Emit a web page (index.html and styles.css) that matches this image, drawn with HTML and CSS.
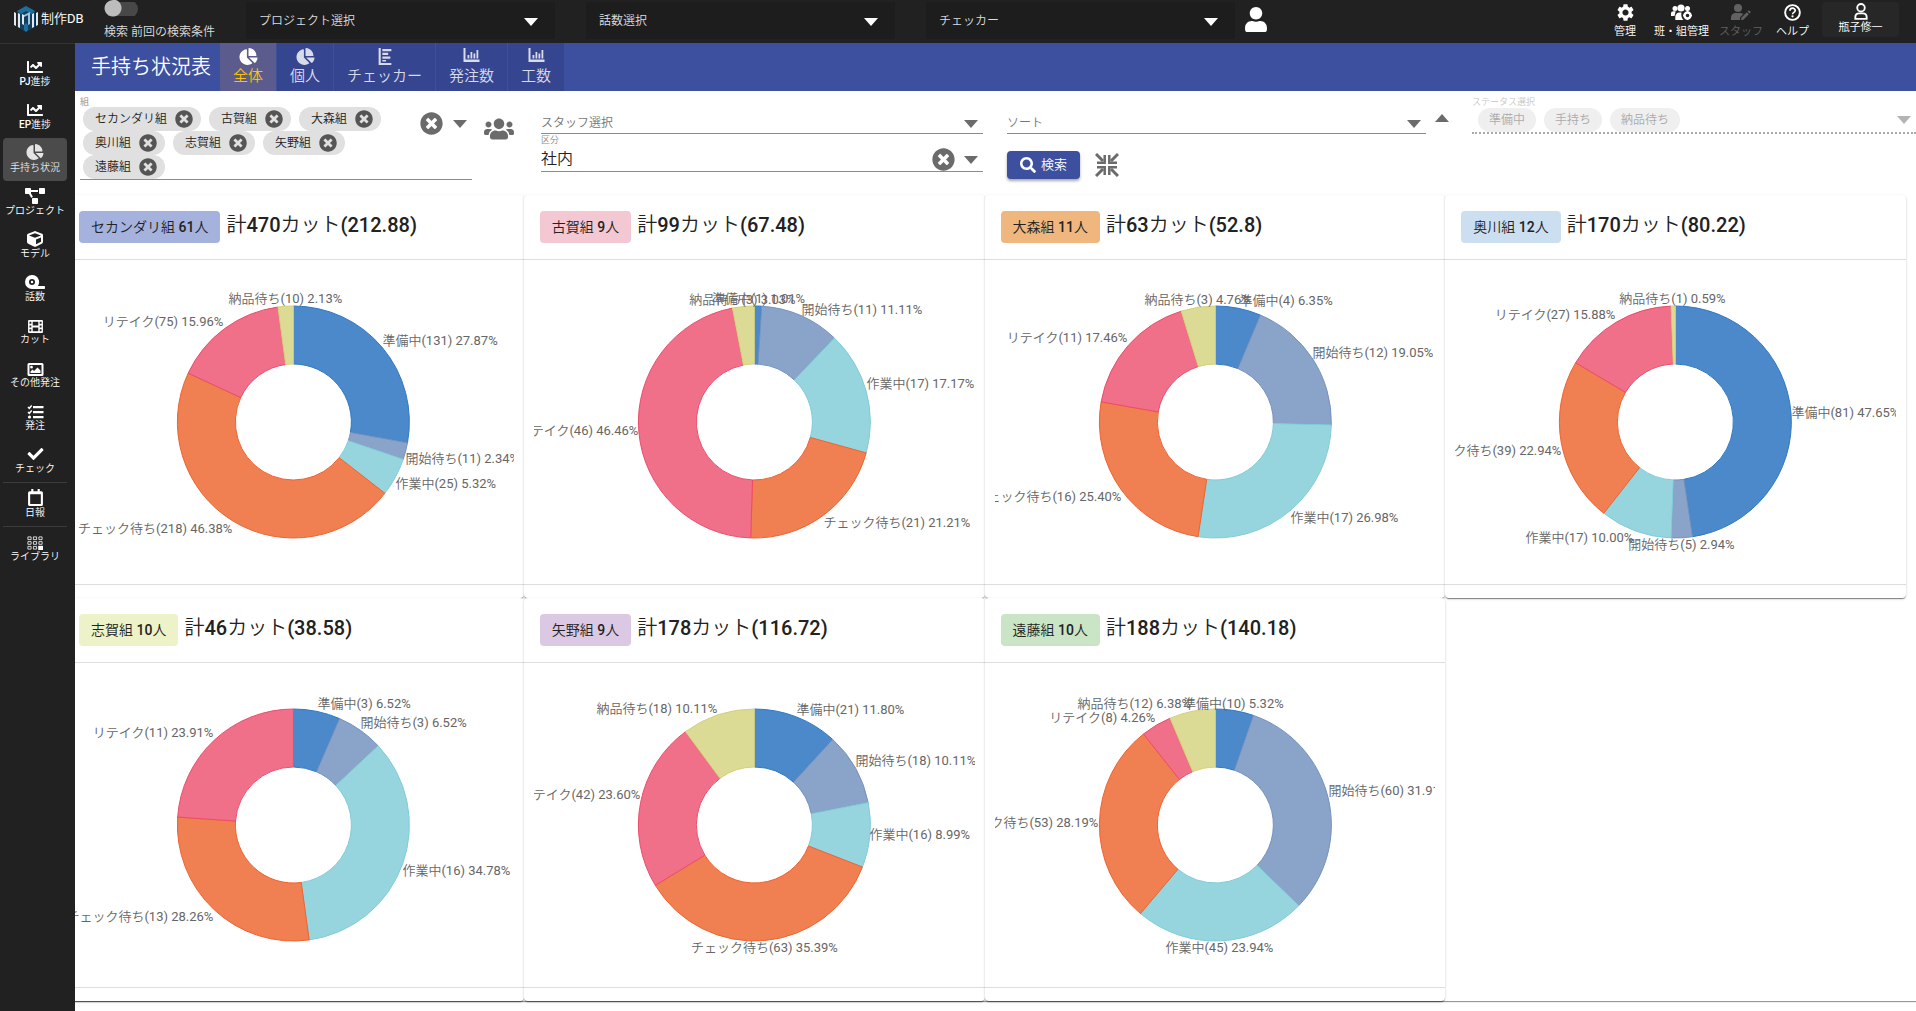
FILE: index.html
```html
<!DOCTYPE html>
<html lang="ja">
<head>
<meta charset="utf-8">
<meta name="viewport" content="width=device-width, initial-scale=1">
<title>手持ち状況表 | 制作DB</title>
<link rel="stylesheet" href="styles.css">
</head>
<body>
<svg class="sprite" aria-hidden="true">
  <symbol id="i-line" viewBox="0 0 512 512"><path d="M496 384H64V80c0-8.84-7.16-16-16-16H16C7.16 64 0 71.16 0 80v336c0 17.67 14.33 32 32 32h464c8.84 0 16-7.16 16-16v-32c0-8.84-7.16-16-16-16zM464 96H345.94c-21.38 0-32.09 25.85-16.97 40.97l32.4 32.4L288 242.75l-73.37-73.37c-12.5-12.5-32.76-12.5-45.25 0l-68.69 68.69c-6.25 6.25-6.25 16.38 0 22.63l22.62 22.62c6.25 6.25 16.38 6.25 22.63 0L192 237.25l73.37 73.37c12.5 12.5 32.76 12.5 45.25 0l96-96 32.4 32.4c15.12 15.12 40.97 4.41 40.97-16.97V112c.01-8.84-7.15-16-15.99-16z"/></symbol>
  <symbol id="i-pie" viewBox="0 0 544 512"><path d="M527.79 288H290.5l158.03 158.03c6.04 6.04 15.98 6.53 22.19.68 38.7-36.46 65.32-85.61 73.13-140.86 1.34-9.46-6.51-17.85-16.06-17.85zm-15.83-64.8C503.72 103.74 408.26 8.28 288.8.04 279.68-.59 272 7.1 272 16.24V240h223.77c9.14 0 16.82-7.68 16.19-16.8zM224 288V50.71c0-9.55-8.39-17.4-17.84-16.06C86.99 51.49-4.1 155.6.14 280.37 4.5 408.51 114.83 513.59 243.03 511.98c50.4-.63 96.97-16.87 135.26-44.03 7.9-5.6 8.42-17.23 1.57-24.08L224 288z"/></symbol>
  <symbol id="i-project" viewBox="0 0 640 512"><path d="M384 320H256c-17.67 0-32 14.33-32 32v128c0 17.67 14.33 32 32 32h128c17.67 0 32-14.33 32-32V352c0-17.67-14.33-32-32-32zM192 32c0-17.67-14.33-32-32-32H32C14.33 0 0 14.33 0 32v128c0 17.67 14.33 32 32 32h95.72l73.16 128.04C211.98 300.98 232.4 288 256 288h.28L192 175.51V128h224V64H192V32zM608 0H480c-17.67 0-32 14.33-32 32v128c0 17.67 14.33 32 32 32h128c17.67 0 32-14.33 32-32V32c0-17.67-14.33-32-32-32z"/></symbol>
  <symbol id="i-cube" viewBox="0 0 512 512"><path d="M239.1 6.3l-208 78c-18.7 7-31.1 25-31.1 45v225.1c0 18.2 10.3 34.8 26.5 42.9l208 104c13.5 6.8 29.4 6.8 42.9 0l208-104c16.3-8.1 26.5-24.8 26.5-42.9V129.3c0-20-12.4-37.9-31.1-44.9l-208-78C262 2.2 250 2.2 239.1 6.3zM256 68.4l192 72v1.1l-192 78-192-78v-1.1l192-72zm32 356V275.5l160-65v133.9l-160 80z"/></symbol>
  <symbol id="i-tape" viewBox="0 0 640 512"><path fill-rule="evenodd" d="M224 32a224 224 0 1 0 0 448h384c18 0 32-14 32-32v-32c0-18-14-32-32-32H410A224 224 0 0 0 224 32zm0 128a96 96 0 1 1 0 192 96 96 0 0 1 0-192zm0 56a40 40 0 1 0 0 80 40 40 0 0 0 0-80z"/></symbol>
  <symbol id="i-film" viewBox="0 0 16 14"><path fill-rule="evenodd" d="M1 0h14a1 1 0 0 1 1 1v12a1 1 0 0 1-1 1H1a1 1 0 0 1-1-1V1a1 1 0 0 1 1-1zm.5 2v2h2V2zm0 4v2h2V6zm0 4v2h2v-2zM5 2v4h6V2zm0 6v4h6V8zm7.500-6v2h2V2zm0 4v2h2V6zm0 4v2h2v-2z"/></symbol>
  <symbol id="i-image" viewBox="0 0 16 13"><path fill-rule="evenodd" d="M1.500 0h13A1.500 1.500 0 0 1 16 1.500v10a1.500 1.500 0 0 1-1.500 1.500h-13A1.500 1.500 0 0 1 0 11.500v-10A1.500 1.500 0 0 1 1.500 0zM2 2v9h12V2zm2 .8a1.400 1.400 0 1 1 0 2.800 1.400 1.400 0 0 1 0-2.800zM3 10V8.500l2-2 1.500 1.500L10 4.500l3 3V10z"/></symbol>
  <symbol id="i-tasks" viewBox="0 0 16 14"><path d="M5.500 1H16v2.200H5.500zM5.500 6H16v2.200H5.500zM5.500 11H16v2.200H5.500z"/><path fill="none" stroke="currentColor" stroke-width="1.500" d="M.5 2l1.300 1.300L4.200.6M.5 7l1.300 1.300 2.400-2.700"/><circle cx="2" cy="12" r="1.600"/></symbol>
  <symbol id="i-check" viewBox="0 0 512 512"><path d="M173.898 439.404l-166.4-166.4c-9.997-9.997-9.997-26.206 0-36.204l36.203-36.204c9.997-9.998 26.207-9.998 36.204 0L192 312.69 432.095 72.596c9.997-9.997 26.207-9.997 36.204 0l36.203 36.204c9.997 9.997 9.997 26.206 0 36.204l-294.4 294.401c-9.998 9.997-26.207 9.997-36.204-.001z"/></symbol>
  <symbol id="i-calendar" viewBox="0 0 14 16"><path fill-rule="evenodd" d="M3 0h2v2h4V0h2v2h1.500A1.500 1.500 0 0 1 14 3.500v11a1.500 1.500 0 0 1-1.500 1.500h-11A1.500 1.500 0 0 1 0 14.500v-11A1.500 1.500 0 0 1 1.500 2H3zM2 5v9h10V5z"/></symbol>
  <symbol id="i-library" viewBox="0 0 16 14"><path fill="none" stroke="currentColor" stroke-width=".8" d="M.9.9h3.200v2.700H.9zM6.400.9h3.200v2.700H6.400zM11.900.9h3.200v2.700h-3.200zM.9 5.600h3.200v2.700H.9zM6.400 5.600h3.200v2.700H6.400zM11.900 5.600h3.200v2.700h-3.200zM.9 10.400h3.200v2.700H.9zM6.400 10.400h3.200v2.700H6.400z"/><path d="M11.200 9.800H16V14h-4.800z"/></symbol>
  <symbol id="i-bar" viewBox="0 0 16 14"><path d="M0 0h2v11.500h14V14H0zM4 7h1.800v3.500H4zM7 4h1.800v6.500H7zM10 5.500h1.800v5H10zM13 2h1.800v8.500H13z"/></symbol>
  <symbol id="i-hbar" viewBox="0 0 12 16"><path d="M0 0h2v14h10v2H0zM3.500 1H12v2H3.500zM3.500 4.500H9v2H3.500zM3.500 8H11v2H3.500zM3.500 11.200h3.500v1.600H3.500z"/></symbol>
  <symbol id="i-times" viewBox="0 0 512 512"><path d="M256 8C119 8 8 119 8 256s111 248 248 248 248-111 248-248S393 8 256 8zm121.6 313.1c4.700 4.700 4.700 12.300 0 17L338 377.600c-4.700 4.700-12.300 4.700-17 0L256 312l-65.100 65.600c-4.700 4.700-12.300 4.700-17 0L134.400 338c-4.700-4.700-4.700-12.300 0-17l65.600-65-65.600-65.100c-4.700-4.700-4.700-12.300 0-17l39.600-39.600c4.700-4.700 12.300-4.700 17 0l65 65.700 65.100-65.600c4.700-4.700 12.300-4.700 17 0l39.600 39.600c4.700 4.700 4.700 12.300 0 17L312 256l65.600 65.100z"/></symbol>
  <symbol id="i-search" viewBox="0 0 512 512"><path d="M505 442.700L405.300 343c-4.500-4.500-10.600-7-17-7H372c27.600-35.300 44-79.700 44-128C416 93.100 322.900 0 208 0S0 93.100 0 208s93.100 208 208 208c48.300 0 92.700-16.400 128-44v16.300c0 6.400 2.500 12.500 7 17l99.700 99.700c9.400 9.400 24.600 9.400 33.900 0l28.300-28.300c9.400-9.400 9.400-24.600.1-34zM208 336c-70.700 0-128-57.200-128-128 0-70.700 57.200-128 128-128 70.700 0 128 57.200 128 128 0 70.700-57.200 128-128 128z"/></symbol>
  <symbol id="i-users" viewBox="0 0 640 512"><path d="M96 224c35.300 0 64-28.700 64-64s-28.700-64-64-64-64 28.700-64 64 28.700 64 64 64zm448 0c35.300 0 64-28.700 64-64s-28.700-64-64-64-64 28.700-64 64 28.700 64 64 64zm32 32h-64c-17.600 0-33.500 7.100-45.100 18.600 40.300 22.100 68.900 62 75.100 109.400h66c17.700 0 32-14.300 32-32v-32c0-35.300-28.700-64-64-64zm-256 0c61.900 0 112-50.100 112-112S381.900 32 320 32 208 82.100 208 144s50.100 112 112 112zm76.800 32h-8.300c-20.800 10-43.900 16-68.500 16s-47.600-6-68.500-16h-8.300C179.600 288 128 339.600 128 403.200V432c0 26.500 21.500 48 48 48h288c26.500 0 48-21.500 48-48v-28.800c0-63.600-51.600-115.200-115.200-115.200zm-223.700-13.400C161.500 263.100 145.600 256 128 256H64c-35.300 0-64 28.700-64 64v32c0 17.700 14.300 32 32 32h65.900c6.300-47.400 34.900-87.300 75.200-109.400z"/></symbol>
  <symbol id="i-user" viewBox="0 0 448 512"><path d="M224 256c70.700 0 128-57.300 128-128S294.700 0 224 0 96 57.300 96 128s57.300 128 128 128zm89.600 32h-16.700c-22.200 10.200-46.900 16-72.900 16s-50.600-5.800-72.900-16h-16.700C60.200 288 0 348.200 0 422.400V464c0 26.500 21.500 48 48 48h352c26.500 0 48-21.500 48-48v-41.600c0-74.200-60.200-134.400-134.400-134.400z"/></symbol>
  <symbol id="i-user-o" viewBox="0 0 14 18"><g fill="none" stroke="currentColor" stroke-width="2"><circle cx="7" cy="5" r="4"/><path d="M1 16.800v-1.800c0-2.500 1.500-4 4-4h4c2.500 0 4 1.500 4 4v1.800z"/></g></symbol>
  <symbol id="i-cog" viewBox="2 2 20 20"><path d="M19.140 12.940c.04-.3.060-.610.060-.940 0-.320-.020-.640-.070-.940l2.030-1.580c.180-.140.230-.410.120-.610l-1.920-3.320c-.120-.220-.370-.290-.590-.220l-2.390.960c-.5-.380-1.030-.7-1.620-.940l-.360-2.540c-.040-.240-.240-.410-.480-.410h-3.840c-.240 0-.430.170-.470.410l-.360 2.540c-.590.240-1.130.570-1.620.940l-2.390-.960c-.220-.080-.470 0-.590.220L2.740 8.870c-.120.210-.080.470.120.610l2.030 1.580c-.050.3-.090.630-.090.940s.020.640.070.940l-2.030 1.580c-.180.140-.230.410-.120.610l1.920 3.320c.120.220.370.290.590.220l2.390-.960c.5.380 1.030.7 1.620.940l.360 2.540c.050.240.240.410.480.410h3.840c.240 0 .440-.170.470-.410l.360-2.540c.590-.240 1.130-.560 1.620-.940l2.390.960c.220.080.470 0 .590-.220l1.920-3.320c.120-.220.070-.470-.120-.610l-2.010-1.580zM12 15.600c-1.980 0-3.600-1.620-3.600-3.600s1.620-3.600 3.600-3.600 3.600 1.620 3.600 3.600-1.620 3.600-3.600 3.600z"/></symbol>
  <symbol id="i-users-cog" viewBox="0 0 22 16"><circle cx="4" cy="4.500" r="2.500"/><circle cx="10" cy="4" r="3.600"/><circle cx="16.500" cy="4.500" r="2.500"/><path d="M0 12V9.500C0 8 1.200 7.300 2.500 7.300h2.200L3.500 12zM4.300 16v-3c0-3 2-4.500 4-4.500h2.200c-.6 2.800 0 5.500 2 7.500z"/><circle cx="16.500" cy="11.500" r="3" fill="none" stroke="currentColor" stroke-width="2.400"/><path d="M15.700 7h1.600v2h-1.600zM15.700 14h1.600v2h-1.600zM12 10.700h2v1.600h-2zM19 10.700h2v1.600h-2z"/></symbol>
  <symbol id="i-user-edit" viewBox="0 0 20 16"><circle cx="7" cy="4" r="4"/><path d="M0 16v-2.500C0 11 2 9 4.500 9h5c1 0 2 .4 2.800 1L9 13.500V16zM10.300 13.800l5.500-5.500 2 2-5.500 5.500-2.200.2zM16.500 7.600l1-1c.8-.8 2.800 1.200 2 2l-1 1z"/></symbol>
  <symbol id="i-help" viewBox="0 0 18 18"><circle cx="9" cy="9" r="7.800" fill="none" stroke="currentColor" stroke-width="2"/><path d="M6.300 7.200c0-3.700 5.600-3.500 5.600-.3 0 2-2.800 1.900-2.800 3.900" fill="none" stroke="currentColor" stroke-width="1.800"/><circle cx="9" cy="13" r="1.200"/></symbol>
  <symbol id="i-compress" viewBox="0 0 24 24"><g fill="none" stroke="currentColor" stroke-width="3"><path d="M1 1l7 7M23 1l-7 7M1 23l7-7M23 23l-7-7"/><path stroke-width="2.500" d="M9.700 2v7.700H2M14.300 2v7.700H22M9.700 22v-7.700H2M14.300 22v-7.700H22"/></g></symbol>
</svg>

<header class="topbar">
  <a class="brand" href="#">
    <svg class="brand-mark" viewBox="0 0 24 26" aria-hidden="true"><path fill="#123f60" d="M12 0l9 5v16l-9 5-9-5V5z"/><path fill="#1f6f9e" d="M12 0l9 5-4 3-5-3-5 3-4-3zM10 19l2-2 2 2v5l-2 2-2-2z"/><path fill="#dfe9ef" d="M0 6l2 1v13l-2-1zM4 7l2 1v14l-2-1zM8 8l2 1v10l-2-1zM24 6l-2 1v13l2-1zM20 7l-2 1v14l2-1z"/><path fill="#9cc3d8" d="M10 9l6-3v2l-6 3zM14 9l2-1v10l-2 1z"/></svg>
    <span>制作DB</span>
  </a>
  <label class="switch">
    <input type="checkbox">
    <span>検索 前回の検索条件</span>
  </label>
  <div class="top-selects">
    <div class="pick dark"><select aria-label="プロジェクト選択"><option>プロジェクト選択</option></select></div>
    <div class="pick dark"><select aria-label="話数選択"><option>話数選択</option></select></div>
    <div class="pick dark"><select aria-label="チェッカー"><option>チェッカー</option></select></div>
  </div>
  <button class="icon-btn me" type="button" aria-label="自分"><svg width="22" height="25"><use href="#i-user"/></svg></button>
  <nav class="top-links">
    <a href="#"><svg width="17" height="17"><use href="#i-cog"/></svg>管理</a>
    <a href="#"><svg width="22" height="16"><use href="#i-users-cog"/></svg>班・組管理</a>
    <a href="#" class="off"><svg width="20" height="16"><use href="#i-user-edit"/></svg>スタッフ</a>
    <a href="#"><svg width="17" height="17"><use href="#i-help"/></svg>ヘルプ</a>
    <button class="account" type="button"><svg width="14" height="17"><use href="#i-user-o"/></svg>瓶子修一</button>
  </nav>
</header>

<div class="shell">
  <nav class="side">
    <a href="#"><svg width="18" height="16"><use href="#i-line"/></svg>PJ進捗</a>
    <a href="#"><svg width="18" height="16"><use href="#i-line"/></svg>EP進捗</a>
    <a href="#" class="current"><svg width="18" height="16"><use href="#i-pie"/></svg>手持ち状況</a>
    <a href="#"><svg width="22" height="16"><use href="#i-project"/></svg>プロジェクト</a>
    <a href="#"><svg width="18" height="16"><use href="#i-cube"/></svg>モデル</a>
    <a href="#"><svg width="20" height="16"><use href="#i-tape"/></svg>話数</a>
    <a href="#"><svg width="17" height="13"><use href="#i-film"/></svg>カット</a>
    <a href="#"><svg width="17" height="13"><use href="#i-image"/></svg>その他発注</a>
    <a href="#"><svg width="17" height="14"><use href="#i-tasks"/></svg>発注</a>
    <a href="#" class="ruled"><svg width="17" height="16"><use href="#i-check"/></svg>チェック</a>
    <a href="#" class="ruled"><svg width="15" height="17"><use href="#i-calendar"/></svg>日報</a>
    <a href="#"><svg width="16" height="14"><use href="#i-library"/></svg>ライブラリ</a>
  </nav>

  <main class="main">
    <div class="titlebar">
      <h1>手持ち状況表</h1>
      <nav class="tabs">
        <a href="#" class="current"><svg width="19" height="17"><use href="#i-pie"/></svg>全体</a>
        <a href="#"><svg width="19" height="17"><use href="#i-pie"/></svg>個人</a>
        <a href="#"><svg width="14" height="17"><use href="#i-hbar"/></svg>チェッカー</a>
        <a href="#"><svg width="17" height="14"><use href="#i-bar"/></svg>発注数</a>
        <a href="#"><svg width="17" height="14"><use href="#i-bar"/></svg>工数</a>
      </nav>
    </div>

    <form class="filters">
      <div class="filter-team">
        <div class="tagfield">
          <span class="cap">組</span>
          <div class="tagrow">
            <ul class="chips">
              <li>セカンダリ組<button type="button" aria-label="セカンダリ組を外す"><svg width="18" height="18"><use href="#i-times"/></svg></button></li>
              <li>古賀組<button type="button" aria-label="古賀組を外す"><svg width="18" height="18"><use href="#i-times"/></svg></button></li>
              <li>大森組<button type="button" aria-label="大森組を外す"><svg width="18" height="18"><use href="#i-times"/></svg></button></li>
              <li>奥川組<button type="button" aria-label="奥川組を外す"><svg width="18" height="18"><use href="#i-times"/></svg></button></li>
              <li>志賀組<button type="button" aria-label="志賀組を外す"><svg width="18" height="18"><use href="#i-times"/></svg></button></li>
              <li>矢野組<button type="button" aria-label="矢野組を外す"><svg width="18" height="18"><use href="#i-times"/></svg></button></li>
              <li>遠藤組<button type="button" aria-label="遠藤組を外す"><svg width="18" height="18"><use href="#i-times"/></svg></button></li>
            </ul>
            <div class="tagtools">
              <button class="icon-btn" type="button" aria-label="組をクリア"><svg width="23" height="23"><use href="#i-times"/></svg></button>
              <button class="icon-btn" type="button" aria-label="組を開く"><span class="tri"></span></button>
            </div>
          </div>
        </div>
        <button class="icon-btn group" type="button" aria-label="メンバー"><svg width="30" height="24"><use href="#i-users"/></svg></button>
      </div>

      <div class="filter-staff">
        <div class="pick line first"><select aria-label="スタッフ選択"><option>スタッフ選択</option></select></div>
        <label class="cap" for="kubun">区分</label>
        <div class="pick line filled">
          <select id="kubun"><option>社内</option></select>
          <button class="icon-btn clear" type="button" aria-label="区分をクリア"><svg width="23" height="23"><use href="#i-times"/></svg></button>
        </div>
      </div>

      <div class="filter-sort">
        <div class="sortrow">
          <div class="pick line first"><select aria-label="ソート"><option>ソート</option></select></div>
          <button class="icon-btn" type="button" aria-label="昇順"><span class="tri up"></span></button>
        </div>
        <div class="actions">
          <button class="search" type="submit"><svg width="16" height="16"><use href="#i-search"/></svg>検索</button>
          <button class="icon-btn" type="button" aria-label="折りたたむ"><svg width="24" height="24"><use href="#i-compress"/></svg></button>
        </div>
      </div>

      <div class="filter-status">
        <span class="cap">ステータス選択</span>
        <div class="statusrow">
          <ul class="chips">
            <li>準備中</li>
            <li>手持ち</li>
            <li>納品待ち</li>
          </ul>
          <span class="tri"></span>
        </div>
      </div>
    </form>

    <div class="board">
      <div class="cards">
        <section class="card"><h2><span class="badge indigo">セカンダリ組 61人</span>計470カット(212.88)</h2><div class="chart"><svg data-team="secondary"></svg></div></section>
        <section class="card"><h2><span class="badge pink">古賀組 9人</span>計99カット(67.48)</h2><div class="chart"><svg data-team="koga"></svg></div></section>
        <section class="card"><h2><span class="badge orange">大森組 11人</span>計63カット(52.8)</h2><div class="chart"><svg data-team="omori"></svg></div></section>
        <section class="card"><h2><span class="badge sky">奥川組 12人</span>計170カット(80.22)</h2><div class="chart"><svg data-team="okugawa"></svg></div></section>
        <section class="card"><h2><span class="badge lime">志賀組 10人</span>計46カット(38.58)</h2><div class="chart"><svg data-team="shiga"></svg></div></section>
        <section class="card"><h2><span class="badge violet">矢野組 9人</span>計178カット(116.72)</h2><div class="chart"><svg data-team="yano"></svg></div></section>
        <section class="card"><h2><span class="badge green">遠藤組 10人</span>計188カット(140.18)</h2><div class="chart"><svg data-team="endo"></svg></div></section>
      </div>
    </div>
  </main>
</div>
<script src="charts.js"></script>
</body>
</html>
```

FILE: styles.css
```css
* { box-sizing: border-box; }

body {
  margin: 0;
  background: #fff;
  color: #222;
  font-family: Roboto, "Noto Sans CJK JP DemiLight", "Noto Sans CJK JP", sans-serif;
  font-size: 12px;
  line-height: 16px;
}

a { color: inherit; text-decoration: none; }
button, select { font: inherit; color: inherit; }
button { margin: 0; padding: 0; border: 0; background: none; cursor: pointer; }
ul { margin: 0; padding: 0; list-style: none; }
svg { display: block; fill: currentColor; }
.sprite { display: none; }
.icon-btn { display: flex; color: #6b6b6b; }

.tri {
  display: block;
  border: 7px solid transparent;
  border-top: 8px solid #6b6b6b;
  border-bottom: 0;
}
.tri.up { border-top: 0; border-bottom: 8px solid #6b6b6b; }

/* top bar */
.topbar {
  display: flex;
  align-items: center;
  height: 43px;
  padding-right: 17px;
  background: #212121;
  color: #fff;
}
.brand {
  display: flex;
  align-items: center;
  gap: 3px;
  width: 104px;
  padding-left: 14px;
  margin-top: -6px;
  font-size: 13px;
}
.brand-mark { width: 24px; height: 26px; }
.switch {
  display: flex;
  flex-direction: column;
  align-self: flex-start;
  gap: 6px;
  width: 142px;
  color: #ddd;
}
.switch input {
  appearance: none;
  width: 34px;
  height: 18px;
  margin: 0;
  border-radius: 9px;
  background:
    radial-gradient(circle at 9px 8px, #bdbdbd 8px, transparent 9px),
    linear-gradient(#484848, #484848) 4px 2px / 30px 14px no-repeat;
}
.top-selects {
  display: flex;
  flex: 0 1 989px;
  align-self: stretch;
  gap: 31px;
}
.pick { position: relative; flex: 1; }
.pick select {
  appearance: none;
  width: 100%;
  height: 100%;
  margin: 0;
  padding: 0;
  border: 0;
  outline: 0;
  background: none;
}
.pick::after {
  content: "";
  position: absolute;
  right: 5px;
  top: 50%;
  margin-top: -3px;
  border: 7px solid transparent;
  border-top: 8px solid #6b6b6b;
  border-bottom: 0;
  pointer-events: none;
}
.pick.dark {
  margin: 2px 0 4px;
  background: #1d1d1d;
  color: #ddd;
}
.pick.dark select { padding-left: 13px; }
.pick.dark::after { right: 17px; border-top-color: #fff; }
.me { margin-left: 10px; margin-top: -5px; color: #fff; }
.top-links {
  display: flex;
  align-self: flex-start;
  gap: 10px;
  margin-left: auto;
  font-size: 11px;
}
.top-links a {
  display: flex;
  flex-direction: column;
  align-items: center;
  justify-content: space-between;
  height: 35px;
  margin-top: 4px;
  line-height: 14px;
}
.top-links a:first-child { margin-right: 8px; }
.top-links .off { margin-right: 3px; color: #616161; }
.account {
  display: flex;
  flex-direction: column;
  align-items: center;
  justify-content: flex-end;
  width: 77px;
  height: 35px;
  margin: 2px 0 0 3px;
  padding-bottom: 1px;
  border-radius: 4px;
  background: #272727;
  line-height: 16px;
}

/* layout */
.shell { display: flex; min-height: calc(100vh - 43px); }
.side {
  flex: none;
  width: 75px;
  padding-top: 8px;
  border-top: 1px solid #333;
  background: #212121;
  color: #fff;
  font-size: 10px;
  font-weight: 500;
}
.side a {
  display: flex;
  flex-direction: column;
  align-items: center;
  justify-content: flex-end;
  width: 64px;
  height: 43px;
  margin: 0 8px 0 3px;
  padding-bottom: 6px;
  border-radius: 4px;
  line-height: 14px;
}
.side .current { background: #4b4b4b; color: #e4e4e4; }
.side .current svg { margin-bottom: 1px; }
.side .ruled { height: 44px; padding-bottom: 6px; border-bottom: 1px solid #3b3b3b; border-radius: 0; }
.main { flex: 1; min-width: 0; overflow: hidden; }

/* title bar */
.titlebar {
  display: flex;
  height: 48px;
  background: #3d4f9f;
  color: #fff;
}
.titlebar h1 {
  margin: 0;
  padding: 0 9px 0 16px;
  font-size: 20px;
  font-weight: 400;
  line-height: 48px;
}
.tabs { display: flex; font-size: 15px; }
.tabs a {
  display: flex;
  flex-direction: column;
  align-items: center;
  justify-content: space-between;
  padding: 5px 13px 5px;
  border-right: 1px solid #3d4f9f;
  background: #36458f;
  color: #d8dbea;
  line-height: 20px;
}
.tabs .current { background: #5c5b8d; color: #ffc107; }
.tabs .current svg { color: #fff; }

/* filters */
.filters {
  display: grid;
  grid-template-columns: 461fr 466fr 465fr 444fr;
  height: 104px;
  padding-left: 5px;
}
.cap {
  display: block;
  color: #8a8a8a;
  font-size: 9px;
  line-height: 12px;
}
.filter-team { display: flex; align-items: flex-start; }
.tagfield { flex: 1; border-bottom: 1px solid #8c8c8c; }
.tagfield .cap, .filter-status .cap { padding-top: 5px; height: 16px; }
.tagrow { display: flex; align-items: flex-start; }
.chips {
  display: flex;
  flex: 1;
  flex-wrap: wrap;
  column-gap: 8px;
  padding-left: 3px;
}
.chips li {
  display: flex;
  align-items: center;
  gap: 8px;
  height: 24px;
  padding: 0 8px 0 12px;
  border-radius: 12px;
  background: #e0e0e0;
}
.chips button { color: #555; }
.tagtools { display: flex; align-items: center; gap: 10px; padding: 5px 5px 0 0; }
.group { margin: 26px 27px 0 12px; }

.pick.line { border-bottom: 1px solid #8c8c8c; color: #757575; }
.pick.line.first { height: 43px; padding-top: 22px; }
.pick.line.first::after { top: 29px; margin-top: 0; }
.filter-staff { padding-right: 24px; }
.pick.filled { height: 26px; font-size: 16px; }
.pick.filled select { color: #222; }
.clear { position: absolute; right: 28px; top: 2px; }
.sortrow { display: flex; align-items: flex-start; }
.sortrow button { margin: 23px 23px 0 9px; }
.actions { display: flex; align-items: center; gap: 15px; margin-top: 17px; }
.search {
  display: flex;
  align-items: center;
  gap: 5px;
  height: 28px;
  padding: 0 13px;
  border-radius: 4px;
  background: #3d4f9f;
  box-shadow: 0 2px 3px rgba(0, 0, 0, .35);
  color: #fff;
  font-size: 13px;
}
.filter-status { opacity: .5; }
.filter-status .chips { padding-left: 6px; }
.filter-status .chips li { padding: 0 11px; color: #555; }
.statusrow {
  display: flex;
  align-items: center;
  height: 27px;
  padding-right: 5px;
  border-bottom: 2px dotted #555;
}

/* team cards */
.board { box-shadow: 0 1px 1px rgba(0, 0, 0, .4); }
.cards {
  display: grid;
  grid-template-columns: repeat(4, 1fr);
  margin: 0 10px 0 -12px;
}
.card {
  padding-bottom: 13px;
  border-radius: 4px;
  background: #fff;
  box-shadow: 0 2px 1px -1px rgba(0, 0, 0, .3), 0 1px 1px rgba(0, 0, 0, .2), 0 1px 3px rgba(0, 0, 0, .15);
}
/* Latin digits carry the medium weight; the Japanese stays light beside them. */
.card h2 {
  display: flex;
  align-items: baseline;
  gap: 6px;
  height: 64px;
  margin: 0;
  padding: 16px 16px 0;
  font-family: "Roboto Medium", Roboto, "Noto Sans CJK JP DemiLight", "Noto Sans CJK JP", sans-serif;
  font-size: 20px;
  font-weight: 400;
  line-height: 24px;
  white-space: nowrap;
}
.badge {
  padding: 0 12px;
  border-radius: 4px;
  font-size: 14px;
  line-height: 32px;
}
.indigo { background: #a4b2dd; }
.pink { background: #f3c8d3; }
.orange { background: #efb67e; }
.sky { background: #cbdff1; }
.lime { background: #edf2c8; }
.violet { background: #dbc8e3; }
.green { background: #c9e5c6; }
.chart {
  padding: 0 10px;
  border: solid #ddd;
  border-width: 1px 0;
}
.chart > svg { width: 100%; height: 324px; }
.chart text { fill: #666; font-size: 13px; }
.chart svg svg { overflow: visible; }
```

FILE: charts.js
```js
// Each slice: status, cut count, share, label anchor, label x and y from the ring's centre.
const STATUS = {
  "準備中": ["#4b89cb", "#2f78c4"],
  "開始待ち": ["#8aa3c8", "#7593c0"],
  "作業中": ["#97d5de", "#80cdd8"],
  "チェック待ち": ["#f07f52", "#ef6330"],
  "リテイク": ["#ef7088", "#ee4c6b"],
  "納品待ち": ["#dcdb95", "#d3d17c"]
};

const TEAMS = {
  secondary: [
    ["準備中", 131, "27.87", "start", 89, -81],
    ["開始待ち", 11, "2.34", "start", 112, 37],
    ["作業中", 25, "5.32", "start", 102, 62],
    ["チェック待ち", 218, "46.38", "end", -61, 107],
    ["リテイク", 75, "15.96", "end", -70, -100],
    ["納品待ち", 10, "2.13", "middle", -8, -123]
  ],
  koga: [
    ["準備中", 1, "1.01", "middle", 4, -123],
    ["開始待ち", 11, "11.11", "start", 47, -112],
    ["作業中", 17, "17.17", "start", 112, -38],
    ["チェック待ち", 21, "21.21", "start", 69, 101],
    ["リテイク", 46, "46.46", "end", -116, 9],
    ["納品待ち", 3, "3.03", "middle", -12, -122]
  ],
  omori: [
    ["準備中", 4, "6.35", "start", 24, -121],
    ["開始待ち", 12, "19.05", "start", 97, -69],
    ["作業中", 17, "26.98", "start", 75, 96],
    ["チェック待ち", 16, "25.40", "end", -94, 75],
    ["リテイク", 11, "17.46", "end", -88, -84],
    ["納品待ち", 3, "4.76", "start", -71, -122]
  ],
  okugawa: [
    ["準備中", 81, "47.65", "start", 116, -9],
    ["開始待ち", 5, "2.94", "middle", 6, 123],
    ["作業中", 17, "10.00", "end", -42, 116],
    ["チェック待ち", 39, "22.94", "end", -114, 29],
    ["リテイク", 27, "15.88", "end", -60, -107],
    ["納品待ち", 1, "0.59", "middle", -3, -123]
  ],
  shiga: [
    ["準備中", 3, "6.52", "start", 24, -121],
    ["開始待ち", 3, "6.52", "start", 67, -102],
    ["作業中", 16, "34.78", "start", 109, 46],
    ["チェック待ち", 13, "28.26", "end", -80, 92],
    ["リテイク", 11, "23.91", "end", -80, -92]
  ],
  yano: [
    ["準備中", 21, "11.80", "start", 42, -115],
    ["開始待ち", 18, "10.11", "start", 101, -64],
    ["作業中", 16, "8.99", "start", 115, 10],
    ["チェック待ち", 63, "35.39", "middle", 10, 123],
    ["リテイク", 42, "23.60", "end", -114, -30],
    ["納品待ち", 18, "10.11", "end", -37, -116]
  ],
  endo: [
    ["準備中", 10, "5.32", "middle", 18, -121],
    ["開始待ち", 60, "31.91", "start", 113, -34],
    ["作業中", 45, "23.94", "middle", 4, 123],
    ["チェック待ち", 53, "28.19", "end", -117, -2],
    ["リテイク", 8, "4.26", "end", -60, -107],
    ["納品待ち", 12, "6.38", "start", -138, -121]
  ]
};

const NS = "http://www.w3.org/2000/svg";
const OUTER = 116;
const INNER = 58;

function add(parent, name, attrs) {
  const el = document.createElementNS(NS, name);
  for (const key in attrs) el.setAttribute(key, attrs[key]);
  parent.appendChild(el);
  return el;
}

function point(r, turn) {
  const a = turn * 2 * Math.PI;
  return (r * Math.sin(a)).toFixed(2) + " " + (-r * Math.cos(a)).toFixed(2);
}

for (const svg of document.querySelectorAll("[data-team]")) {
  const slices = TEAMS[svg.dataset.team];
  const total = slices.reduce((sum, s) => sum + s[1], 0);
  const ring = add(svg, "svg", { x: "50%", y: "50%" });
  let from = 0;
  for (const [name, count] of slices) {
    const to = from + count / total;
    const big = to - from > 0.5 ? 1 : 0;
    add(ring, "path", {
      d: `M${point(OUTER, from)}A${OUTER} ${OUTER} 0 ${big} 1 ${point(OUTER, to)}` +
         `L${point(INNER, to)}A${INNER} ${INNER} 0 ${big} 0 ${point(INNER, from)}Z`,
      fill: STATUS[name][0],
      stroke: STATUS[name][1]
    });
    from = to;
  }
  for (const [name, count, share, anchor, x, y] of slices) {
    add(ring, "text", { x, y: y + 4, "text-anchor": anchor })
      .textContent = `${name}(${count}) ${share}%`;
  }
}
```
